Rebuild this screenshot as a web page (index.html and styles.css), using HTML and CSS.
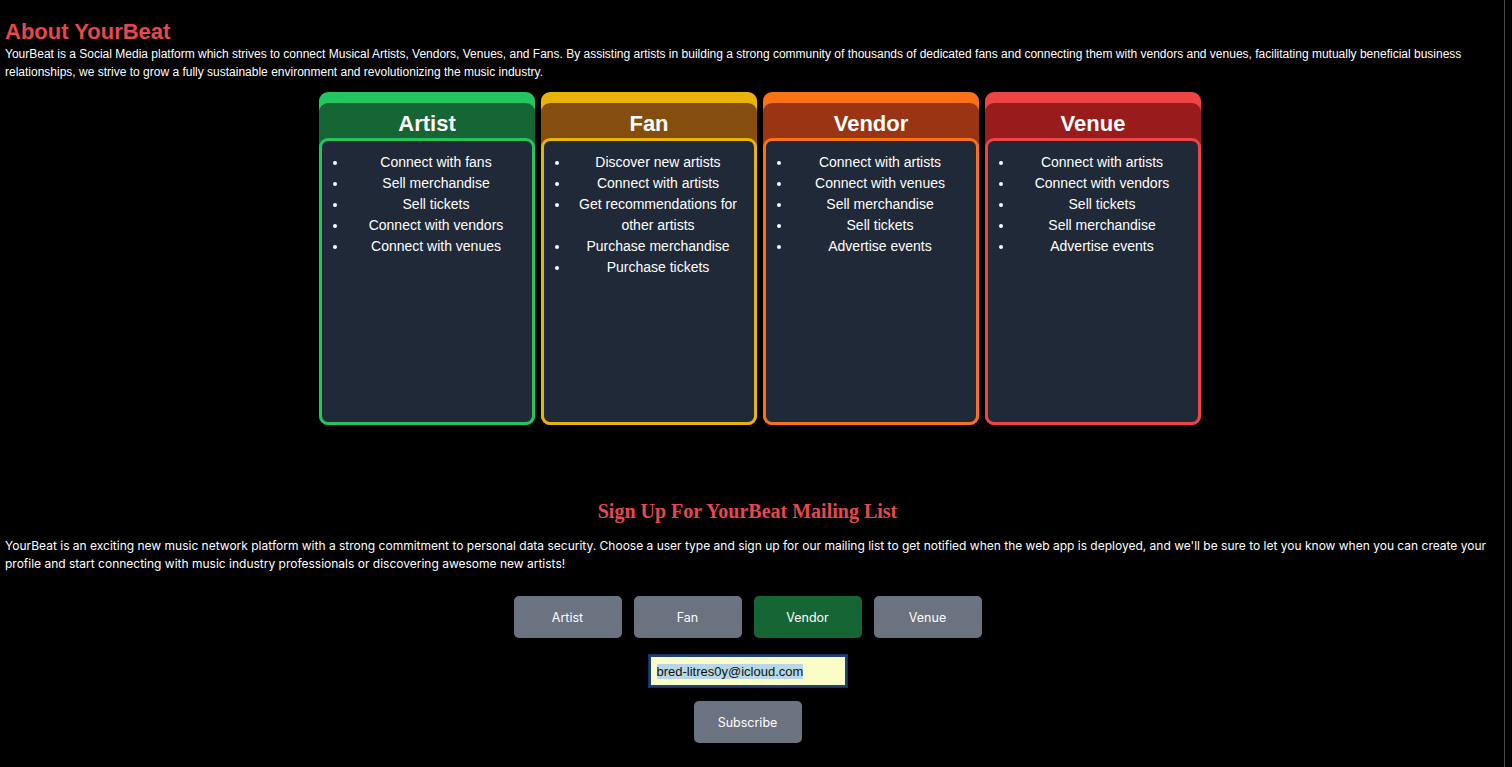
FILE: index.html
```html
<!DOCTYPE html>
<html lang="en">
<head>
<meta charset="utf-8">
<title>YourBeat</title>
<link rel="stylesheet" href="styles.css">
</head>
<body>
<div class="page">
  <section class="about">
    <h1 class="about-title">About YourBeat</h1>
    <p class="about-text">YourBeat is a Social Media platform which strives to connect Musical Artists, Vendors, Venues, and Fans. By assisting artists in building a strong community of thousands of dedicated fans and connecting them with vendors and venues, facilitating mutually beneficial business relationships, we strive to grow a fully sustainable environment and revolutionizing the music industry.</p>
    <div class="cards">
      <div class="card card-green">
        <div class="card-inner">
          <h2 class="card-title">Artist</h2>
          <ul class="card-list">
            <li>Connect with fans</li>
            <li>Sell merchandise</li>
            <li>Sell tickets</li>
            <li>Connect with vendors</li>
            <li>Connect with venues</li>
          </ul>
        </div>
      </div>
      <div class="card card-yellow">
        <div class="card-inner">
          <h2 class="card-title">Fan</h2>
          <ul class="card-list">
            <li>Discover new artists</li>
            <li>Connect with artists</li>
            <li>Get recommendations for other artists</li>
            <li>Purchase merchandise</li>
            <li>Purchase tickets</li>
          </ul>
        </div>
      </div>
      <div class="card card-orange">
        <div class="card-inner">
          <h2 class="card-title">Vendor</h2>
          <ul class="card-list">
            <li>Connect with artists</li>
            <li>Connect with venues</li>
            <li>Sell merchandise</li>
            <li>Sell tickets</li>
            <li>Advertise events</li>
          </ul>
        </div>
      </div>
      <div class="card card-red">
        <div class="card-inner">
          <h2 class="card-title">Venue</h2>
          <ul class="card-list">
            <li>Connect with artists</li>
            <li>Connect with vendors</li>
            <li>Sell tickets</li>
            <li>Sell merchandise</li>
            <li>Advertise events</li>
          </ul>
        </div>
      </div>
    </div>
  </section>

  <section class="signup">
    <h2 class="signup-title">Sign Up For YourBeat Mailing List</h2>
    <p class="signup-text">YourBeat is an exciting new music network platform with a strong commitment to personal data security. Choose a user type and sign up for our mailing list to get notified when the web app is deployed, and we'll be sure to let you know when you can create your profile and start connecting with music industry professionals or discovering awesome new artists!</p>
    <div class="type-buttons">
      <button class="btn" type="button">Artist</button>
      <button class="btn" type="button">Fan</button>
      <button class="btn btn-active" type="button">Vendor</button>
      <button class="btn" type="button">Venue</button>
    </div>
    <div class="email-row">
      <div class="email-input"><span class="email-selected">bred-litres0y@icloud.com</span></div>
    </div>
    <div class="submit-row">
      <button class="btn" type="button">Subscribe</button>
    </div>
  </section>
</div>
</body>
</html>
```

FILE: styles.css
```css
* { box-sizing: border-box; }

html, body {
  margin: 0;
  padding: 0;
  background: #000;
}

body {
  font-family: "Liberation Sans", Arial, sans-serif;
  color: #fff;
}

.page {
  width: 1505px;
  min-height: 767px;
  border-right: 1px solid #4b4b4b;
  padding: 0 16px 0 5px;
}

.about-title {
  margin: 0;
  padding-top: 18px;
  font-size: 22px;
  line-height: 27px;
  font-weight: 700;
  color: #e5484d;
}

.about-text {
  margin: 0;
  font-size: 12px;
  line-height: 18px;
  color: #fff;
}

.cards {
  display: flex;
  justify-content: center;
  gap: 6px;
  margin-top: 11px;
  padding-left: 27px;
}

.card {
  width: 216px;
  height: 333px;
  border-radius: 9px;
  padding-top: 11px;
}

.card-inner {
  height: 100%;
  border-radius: 9px;
  display: flex;
  flex-direction: column;
}

.card-title {
  margin: 0;
  height: 35px;
  font-size: 22px;
  line-height: 42px;
  font-weight: 700;
  text-align: center;
  color: #fff;
}

.card-list {
  flex: 1;
  margin: 0;
  padding: 11px 8px 10px 26px;
  border: 3px solid;
  border-radius: 9px;
  background: #1f2937;
  list-style: disc;
  font-size: 14px;
  line-height: 21px;
  text-align: center;
  color: #fff;
}

.card-green { background: #22c55e; }
.card-green .card-inner { background: #166534; }
.card-green .card-list { border-color: #22c55e; }

.card-yellow { background: #eab308; }
.card-yellow .card-inner { background: #854d0e; }
.card-yellow .card-list { border-color: #eab308; }

.card-orange { background: #f97316; }
.card-orange .card-inner { background: #9a3412; }
.card-orange .card-list { border-color: #f97316; }

.card-red { background: #ef4444; }
.card-red .card-inner { background: #991b1b; }
.card-red .card-list { border-color: #ef4444; }

.signup {
  margin-top: 74px;
}

.signup-title {
  margin: 0;
  padding-left: 2px;
  text-align: center;
  font-family: "Liberation Serif", "Times New Roman", serif;
  font-size: 20px;
  line-height: 24px;
  font-weight: 700;
  color: #e5484d;
}

.signup-text {
  margin: 14px 0 0;
  font-family: Inter, "Liberation Sans", sans-serif;
  font-size: 12px;
  line-height: 18px;
  color: #fff;
}

.type-buttons {
  display: flex;
  justify-content: center;
  gap: 12px;
  margin-top: 23px;
  padding-left: 2px;
}

.btn {
  width: 108px;
  height: 42px;
  border: none;
  border-radius: 5px;
  background: #6b7280;
  color: #fff;
  font-family: Inter, "Liberation Sans", sans-serif;
  font-size: 12.5px;
  cursor: pointer;
}

.btn-active { background: #166534; }

.email-row {
  display: flex;
  justify-content: center;
  margin-top: 17px;
  padding-left: 2px;
}

.email-input {
  width: 198px;
  height: 32px;
  background: #fafdc6;
  border: 2px solid #1d3f7c;
  outline: 1px solid #16305e;
  padding: 0 6px;
  display: flex;
  align-items: center;
  font-family: "Liberation Sans", Arial, sans-serif;
  font-size: 13px;
  color: #111;
}

.email-selected {
  background: #b7d8e4;
}

.submit-row {
  display: flex;
  justify-content: center;
  margin-top: 14px;
  padding-left: 2px;
}
```
